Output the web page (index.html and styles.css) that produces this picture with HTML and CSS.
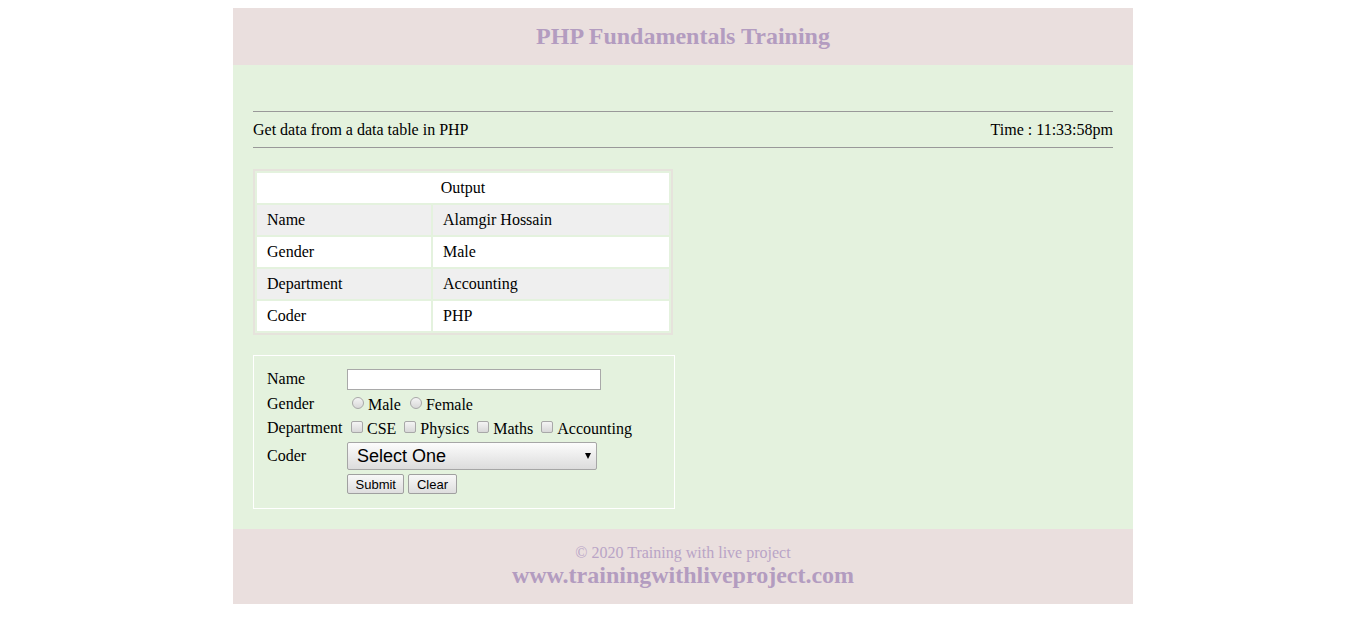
FILE: index.html
```html
<!DOCTYPE html>
<html>
<head>
<meta charset="utf-8">
<title>PHP Fundamentals Training</title>
<link rel="stylesheet" href="styles.css">
</head>
<body>
<div class="page">
  <header class="top">
    <h1 class="title">PHP Fundamentals Training</h1>
  </header>
  <main class="content">
    <div class="bar">
      <span>Get data from a data table in PHP</span>
      <span>Time : 11:33:58pm</span>
    </div>
    <table class="output">
      <tr class="head"><td colspan="2">Output</td></tr>
      <tr class="odd"><td class="c1">Name</td><td>Alamgir Hossain</td></tr>
      <tr><td class="c1">Gender</td><td>Male</td></tr>
      <tr class="odd"><td class="c1">Department</td><td>Accounting</td></tr>
      <tr><td class="c1">Coder</td><td>PHP</td></tr>
    </table>
    <form class="form">
      <div class="row r-name">
        <span class="lbl">Name</span>
        <input type="text" class="txt">
      </div>
      <div class="row r-gender">
        <span class="lbl">Gender</span>
        <span class="opts">
          <label class="opt"><input type="radio" name="g" class="radio">Male</label>
          <label class="opt"><input type="radio" name="g" class="radio">Female</label>
        </span>
      </div>
      <div class="row r-dept">
        <span class="lbl">Department</span>
        <span class="opts">
          <label class="opt"><input type="checkbox" class="check">CSE</label>
          <label class="opt"><input type="checkbox" class="check">Physics</label>
          <label class="opt"><input type="checkbox" class="check">Maths</label>
          <label class="opt"><input type="checkbox" class="check">Accounting</label>
        </span>
      </div>
      <div class="row r-coder">
        <span class="lbl">Coder</span>
        <span class="selwrap"><select class="sel"><option>Select One</option></select></span>
      </div>
      <div class="row r-btn">
        <span class="lbl"></span>
        <span class="btns">
          <button type="button" class="btn">Submit</button>
          <button type="button" class="btn">Clear</button>
        </span>
      </div>
    </form>
  </main>
  <footer class="foot">
    <div class="copy">© 2020 Training with live project</div>
    <div class="url">www.trainingwithliveproject.com</div>
  </footer>
</div>
</body>
</html>
```

FILE: styles.css
```css
html, body {
  margin: 0;
  padding: 0;
  background: #ffffff;
}
body {
  padding-top: 8px;
  font-family: "Liberation Serif", "Times New Roman", serif;
  font-size: 16px;
  color: #000;
}
.page {
  width: 900px;
  margin: 0 auto;
}
.top {
  background: #eadfde;
  height: 57px;
  box-sizing: border-box;
  padding-bottom: 2px;
  display: flex;
  align-items: center;
  justify-content: center;
}
.title {
  margin: 0;
  font-size: 24px;
  font-weight: bold;
  color: #b39cc0;
  line-height: 28px;
}
.content {
  background: #e4f2de;
  padding: 46px 20px 20px 20px;
}
.bar {
  border-top: 1px solid #999;
  border-bottom: 1px solid #999;
  height: 35px;
  display: flex;
  justify-content: space-between;
  align-items: center;
  line-height: 18px;
}
.output {
  margin-top: 21px;
  width: 420px;
  border: 2px solid #e6e3dc;
  border-spacing: 2px;
  border-collapse: separate;
  background: #e4f2de;
}
.output td {
  height: 30px;
  padding: 0 10px;
  box-sizing: border-box;
  background: #fff;
  line-height: 18px;
}
.output .head td {
  text-align: center;
}
.output .odd td {
  background: #efefef;
}
.output .c1 {
  width: 174px;
}
.form {
  margin-top: 20px;
  width: 422px;
  box-sizing: border-box;
  border: 1px solid #fff;
  padding: 12px 0 14px 13px;
  display: flex;
  flex-direction: column;
}
.row {
  display: flex;
  align-items: center;
}
.lbl {
  width: 80px;
  flex: none;
}
.r-name { height: 22px; }
.r-gender { height: 25px; margin-top: 1px; }
.r-dept { height: 24px; }
.r-coder { height: 28px; margin-top: 2px; }
.r-btn { margin-top: 4px; height: 20px; }
.r-gender .opts, .r-dept .opts { position: relative; top: 1px; }
.txt {
  width: 254px;
  height: 21px;
  box-sizing: border-box;
  border: 1px solid #a9a9a9;
  background: #fff;
  margin: 0;
  padding: 1px 2px;
}
.opts {
  display: flex;
  align-items: center;
}
.opt {
  display: flex;
  align-items: center;
  margin-right: 4px;
}
.radio, .check {
  -webkit-appearance: none;
  appearance: none;
  margin: 0 4px 0 5px;
  width: 12px;
  height: 12px;
  box-sizing: border-box;
  border: 1px solid #a8a8a8;
  background: linear-gradient(#f4f4f4, #d8d8d8);
  position: relative;
  top: -2px;
}
.radio {
  border-radius: 50%;
}
.check {
  border-radius: 2px;
  margin: 0 4px 0 4px;
}
.selwrap {
  position: relative;
  display: inline-block;
}
.sel {
  -webkit-appearance: none;
  appearance: none;
  width: 250px;
  height: 28px;
  box-sizing: border-box;
  border: 1px solid #a6a6a6;
  border-radius: 2px;
  background: linear-gradient(#fcfcfc, #dcdcdc);
  font-family: "Liberation Sans", Arial, sans-serif;
  font-size: 18px;
  color: #000;
  padding: 0 0 0 9px;
  margin: 0;
}
.selwrap::after {
  content: "";
  position: absolute;
  right: 6px;
  top: 11px;
  border-left: 3px solid transparent;
  border-right: 3px solid transparent;
  border-top: 6px solid #000;
}
.btns {
  display: flex;
  gap: 4px;
}
.btn {
  font-family: "Liberation Sans", Arial, sans-serif;
  font-size: 13px;
  height: 20px;
  padding: 0 7.5px;
  border: 1px solid #a0a0a0;
  border-radius: 2px;
  background: linear-gradient(#f8f8f8, #dedede);
  color: #000;
  margin: 0;
}
.foot {
  background: #eadfde;
  height: 75px;
  box-sizing: border-box;
  padding-top: 14px;
  text-align: center;
  color: #b39cc0;
}
.copy {
  font-size: 16px;
  line-height: 20px;
  color: #b9a4c6;
}
.url {
  font-size: 24px;
  font-weight: bold;
  line-height: 24px;
}
```
